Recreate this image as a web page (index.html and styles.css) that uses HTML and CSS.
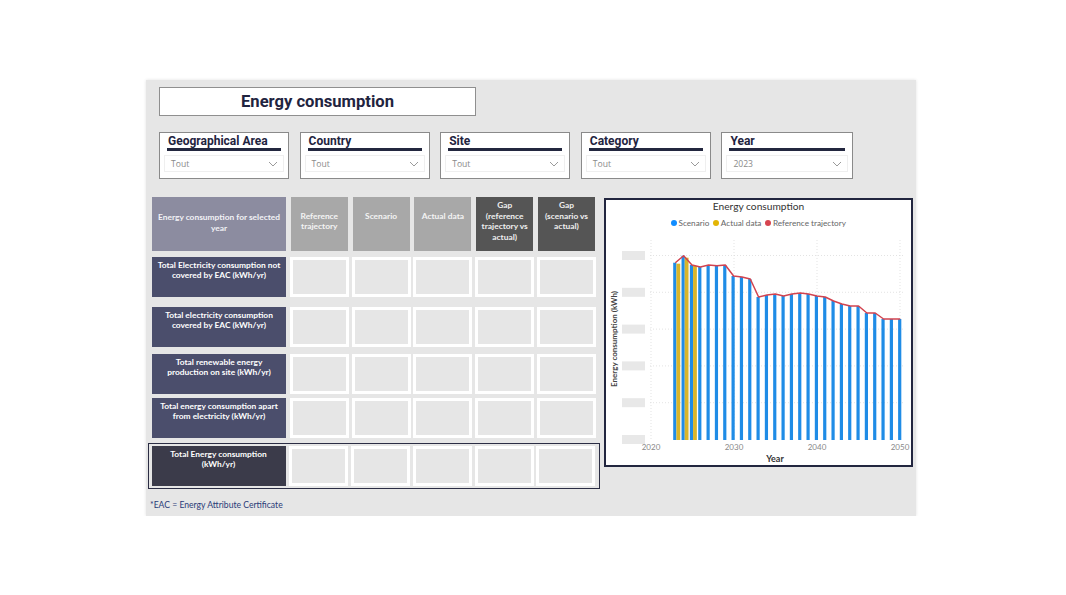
FILE: index.html
```html
<!DOCTYPE html>
<html>
<head>
<meta charset="utf-8">
<link rel="stylesheet" href="styles.css">
</head>
<body>
<div class="panel">
  <div class="page-title">Energy consumption</div>

  <div class="filters">
    <div class="filter"><div class="f-title">Geographical Area</div><div class="dd"><span>Tout</span><svg class="chev" width="10" height="6" viewBox="0 0 10 6"><path d="M1 1 L5 5 L9 1" fill="none" stroke="#9a9a9a" stroke-width="1"/></svg></div></div>
    <div class="filter"><div class="f-title">Country</div><div class="dd"><span>Tout</span><svg class="chev" width="10" height="6" viewBox="0 0 10 6"><path d="M1 1 L5 5 L9 1" fill="none" stroke="#9a9a9a" stroke-width="1"/></svg></div></div>
    <div class="filter"><div class="f-title">Site</div><div class="dd"><span>Tout</span><svg class="chev" width="10" height="6" viewBox="0 0 10 6"><path d="M1 1 L5 5 L9 1" fill="none" stroke="#9a9a9a" stroke-width="1"/></svg></div></div>
    <div class="filter"><div class="f-title">Category</div><div class="dd"><span>Tout</span><svg class="chev" width="10" height="6" viewBox="0 0 10 6"><path d="M1 1 L5 5 L9 1" fill="none" stroke="#9a9a9a" stroke-width="1"/></svg></div></div>
    <div class="filter wide"><div class="f-title">Year</div><div class="dd"><span>2023</span><svg class="chev" width="10" height="6" viewBox="0 0 10 6"><path d="M1 1 L5 5 L9 1" fill="none" stroke="#9a9a9a" stroke-width="1"/></svg></div></div>
  </div>

  <div class="main">
    <div class="table-area">
      <div class="row head">
        <div class="h-label">Energy consumption for selected<br>year</div>
        <div class="h-light">Reference<br>trajectory</div>
        <div class="h-light">Scenario</div>
        <div class="h-light">Actual data</div>
        <div class="h-dark">Gap<br>(reference<br>trajectory vs<br>actual)</div>
        <div class="h-dark">Gap<br>(scenario vs<br>actual)</div>
      </div>
      <div class="row data m6">
        <div class="label">Total Electricity consumption not<br>covered by EAC (kWh/yr)</div>
        <div class="cell"></div><div class="cell"></div><div class="cell"></div><div class="cell"></div><div class="cell"></div>
      </div>
      <div class="row data m10">
        <div class="label">Total electricity consumption<br>covered by EAC (kWh/yr)</div>
        <div class="cell"></div><div class="cell"></div><div class="cell"></div><div class="cell"></div><div class="cell"></div>
      </div>
      <div class="row data m7">
        <div class="label">Total renewable energy<br>production on site (kWh/yr)</div>
        <div class="cell"></div><div class="cell"></div><div class="cell"></div><div class="cell"></div><div class="cell"></div>
      </div>
      <div class="row data m4">
        <div class="label">Total energy consumption apart<br>from electricity (kWh/yr)</div>
        <div class="cell"></div><div class="cell"></div><div class="cell"></div><div class="cell"></div><div class="cell"></div>
      </div>
      <div class="total-box">
        <div class="row data">
          <div class="label total">Total Energy consumption<br>(kWh/yr)</div>
          <div class="cell"></div><div class="cell"></div><div class="cell"></div><div class="cell"></div><div class="cell"></div>
        </div>
      </div>
      <div class="footnote">*EAC = Energy Attribute Certificate</div>
    </div>

    <div class="chart">
      <div class="c-title">Energy consumption</div>
      <div class="legend">
        <span class="lg"><i class="dot blue"></i>Scenario</span>
        <span class="lg"><i class="dot yellow"></i>Actual data</span>
        <span class="lg"><i class="dot red"></i>Reference trajectory</span>
      </div>
      <svg class="plot" width="305" height="235" viewBox="0 0 305 235">
        <g fill="#e8e8e8">
          <rect x="16" y="21" width="23" height="9"/>
          <rect x="16" y="57.8" width="23" height="9"/>
          <rect x="16" y="94.6" width="23" height="9"/>
          <rect x="16" y="131.4" width="23" height="9"/>
          <rect x="16" y="168.2" width="23" height="9"/>
          <rect x="16" y="205" width="23" height="9"/>
        </g>
        <g stroke="#dcdcdc" stroke-width="0.8" stroke-dasharray="1 2" fill="none">
          <line x1="44" y1="25.5" x2="299" y2="25.5"/>
          <line x1="44" y1="62.3" x2="299" y2="62.3"/>
          <line x1="44" y1="99.1" x2="299" y2="99.1"/>
          <line x1="44" y1="135.9" x2="299" y2="135.9"/>
          <line x1="44" y1="172.7" x2="299" y2="172.7"/>
          <line x1="45" y1="10" x2="45" y2="210"/>
          <line x1="128" y1="10" x2="128" y2="210"/>
          <line x1="211" y1="10" x2="211" y2="210"/>
          <line x1="294" y1="10" x2="294" y2="210"/>
        </g>
        <text class="ytitle" transform="translate(11 109) rotate(-90)" text-anchor="middle">Energy consumption (kWh)</text>
        <g fill="#1f8ce6">
          <rect x="67.2" y="32.7" width="3.2" height="177.3"/>
          <rect x="75.53" y="25.7" width="3.2" height="184.3"/>
          <rect x="83.86" y="35" width="3.2" height="175"/>
          <rect x="92.19" y="37" width="3.2" height="173"/>
          <rect x="100.52" y="35" width="3.2" height="175"/>
          <rect x="108.85" y="35.7" width="3.2" height="174.3"/>
          <rect x="117.18" y="35" width="3.2" height="175"/>
          <rect x="125.51" y="46" width="3.2" height="164"/>
          <rect x="133.84" y="47" width="3.2" height="163"/>
          <rect x="142.17" y="49" width="3.2" height="161"/>
          <rect x="150.5" y="67" width="3.2" height="143"/>
          <rect x="158.83" y="65" width="3.2" height="145"/>
          <rect x="167.16" y="64" width="3.2" height="146"/>
          <rect x="175.49" y="66" width="3.2" height="144"/>
          <rect x="183.82" y="64" width="3.2" height="146"/>
          <rect x="192.15" y="63" width="3.2" height="147"/>
          <rect x="200.48" y="64" width="3.2" height="146"/>
          <rect x="208.81" y="66" width="3.2" height="144"/>
          <rect x="217.14" y="67" width="3.2" height="143"/>
          <rect x="225.47" y="71" width="3.2" height="139"/>
          <rect x="233.8" y="74" width="3.2" height="136"/>
          <rect x="242.13" y="76" width="3.2" height="134"/>
          <rect x="250.46" y="76" width="3.2" height="134"/>
          <rect x="258.79" y="83" width="3.2" height="127"/>
          <rect x="267.12" y="83" width="3.2" height="127"/>
          <rect x="275.45" y="89" width="3.2" height="121"/>
          <rect x="283.78" y="89" width="3.2" height="121"/>
          <rect x="292.11" y="89" width="3.2" height="121"/>
        </g>
        <g fill="#d8b52a">
          <rect x="70.4" y="33.7" width="3.8" height="176.3"/>
          <rect x="78.73" y="27.7" width="3.8" height="182.3"/>
          <rect x="87.06" y="36" width="3.8" height="174"/>
        </g>
        <polyline fill="none" stroke="#d2434f" stroke-width="1.5" stroke-linejoin="round" points="69.3,32.7 77.63,25.7 85.96,35 94.29,37 102.62,35 110.95,35.7 119.28,35 127.61,46 135.94,47 144.27,49 152.6,67 160.93,65 169.26,64 177.59,66 185.92,64 194.25,63 202.58,64 210.91,66 219.24,67 227.57,71 235.9,74 244.23,76 252.56,76 260.89,83 269.22,83 277.55,89 285.88,89 294.21,89"/>
        <g class="xlab" text-anchor="middle">
          <text x="45" y="220">2020</text>
          <text x="128" y="220">2030</text>
          <text x="211" y="220">2040</text>
          <text x="294" y="220">2050</text>
        </g>
        <text class="xtitle" x="169" y="231.5" text-anchor="middle">Year</text>
      </svg>
    </div>
  </div>
</div>
</body>
</html>
```

FILE: styles.css
```css
* { box-sizing: border-box; }
html, body { margin: 0; padding: 0; background: #ffffff; }
body { font-family: "Lato", "Open Sans", sans-serif; }

.panel {
  margin: 80px 0 0 146px;
  width: 770px;
  height: 436px;
  background: #e6e6e6;
  box-shadow: 0 0 3px rgba(0,0,0,0.12);
  padding-top: 7px;
}

.page-title {
  margin-left: 13px;
  width: 317px;
  height: 29px;
  background: #fff;
  border: 1px solid #8f8f8f;
  font-family: "Roboto", sans-serif;
  font-weight: 700;
  font-size: 16.6px;
  color: #1f2440;
  display: flex;
  align-items: center;
  justify-content: center;
}

.filters {
  margin: 16px 0 0 13px;
  display: flex;
  gap: 10.6px;
}
.filter {
  width: 130px;
  height: 47px;
  background: #fff;
  border: 1px solid #8a8a8a;
  padding: 1px 4px 0;
}
.filter.wide { width: 132px; }
.f-title {
  margin: 0 3px 0 3px;
  font-family: "Roboto", sans-serif;
  font-weight: 700;
  font-size: 12px;
  line-height: 14px;
  color: #1f2440;
  border-bottom: 3px solid #23273f;
  padding-left: 1px;
}
.dd {
  margin-top: 4px;
  height: 17px;
  border: 1px solid #efefef;
  display: flex;
  align-items: center;
  justify-content: space-between;
  padding: 0 5px 0 6px;
  font-family: "Open Sans", sans-serif;
  font-size: 8.6px;
  color: #8a8a8a;
}
.chev { display: block; }

.main {
  margin: 18px 0 0 2px;
  display: flex;
  align-items: flex-start;
}
.table-area { width: 452px; }

.row {
  display: grid;
  grid-template-columns: 134px repeat(5, 57px);
  column-gap: 4.8px;
  margin-left: 4px;
}
.row.head { height: 53.5px; margin-top: 0.3px; }
.row.data { height: 40px; }
.m6 { margin-top: 6px; }
.m10 { margin-top: 10px; }
.m7 { margin-top: 7px; }
.m4 { margin-top: 4px; }

.h-label, .h-light, .h-dark, .label {
  display: flex;
  align-items: center;
  justify-content: center;
  text-align: center;
  white-space: nowrap;
  font-weight: 700;
  font-size: 8.4px;
  line-height: 10.5px;
  color: #fff;
  padding: 0;
}
.h-label { background: #8c8ca0; color: #f2f2f6; padding-bottom: 3px; }
.h-light { background: #a8a8a8; color: #f4f4f4; }
.h-dark { background: #555555; color: #f0f0f0; }
.h-light { align-items: flex-start; padding-top: 13.5px; }
.h-dark { align-items: flex-start; padding-top: 3px; }
.label { background: #4b4e6c; align-items: flex-start; padding-top: 3px; }
.label.total { background: #3b3b4a; }

.cell {
  background: #e6e6e6;
  border: 3px solid #ffffff;
  margin: 0 -1px;
}

.total-box {
  margin-top: 5px;
  width: 452px;
  border: 1.5px solid #2b2d44;
  padding: 2px 0 2.5px 0;
}
.total-box .row { margin-left: 2.5px; }

.footnote {
  margin: 10px 0 0 2px;
  font-size: 8.6px;
  line-height: 12px;
  color: #2a3b78;
}

.chart {
  margin: 1px 0 0 4px;
  width: 309px;
  height: 269px;
  background: #fff;
  border: 2px solid #22263f;
  display: flex;
  flex-direction: column;
}
.c-title {
  height: 13px;
  line-height: 13px;
  text-align: center;
  font-size: 10.2px;
  color: #333;
}
.legend {
  margin-top: 3px;
  height: 14px;
  display: flex;
  justify-content: center;
  align-items: center;
  gap: 4px;
  font-size: 8.2px;
  color: #666;
}
.lg { display: flex; align-items: center; gap: 1.5px; }
.dot { display: inline-block; width: 6px; height: 6px; border-radius: 50%; }
.dot.blue { background: #118dff; }
.dot.yellow { background: #e3b505; }
.dot.red { background: #d64550; }
.plot { display: block; }
.ytitle { font-family: "Lato", sans-serif; font-size: 8px; font-weight: 700; fill: #444; }
.xlab text { font-family: "Lato", sans-serif; font-size: 8px; fill: #888; }
.xtitle { font-family: "Lato", sans-serif; font-size: 9px; font-weight: 700; fill: #333; }
```
